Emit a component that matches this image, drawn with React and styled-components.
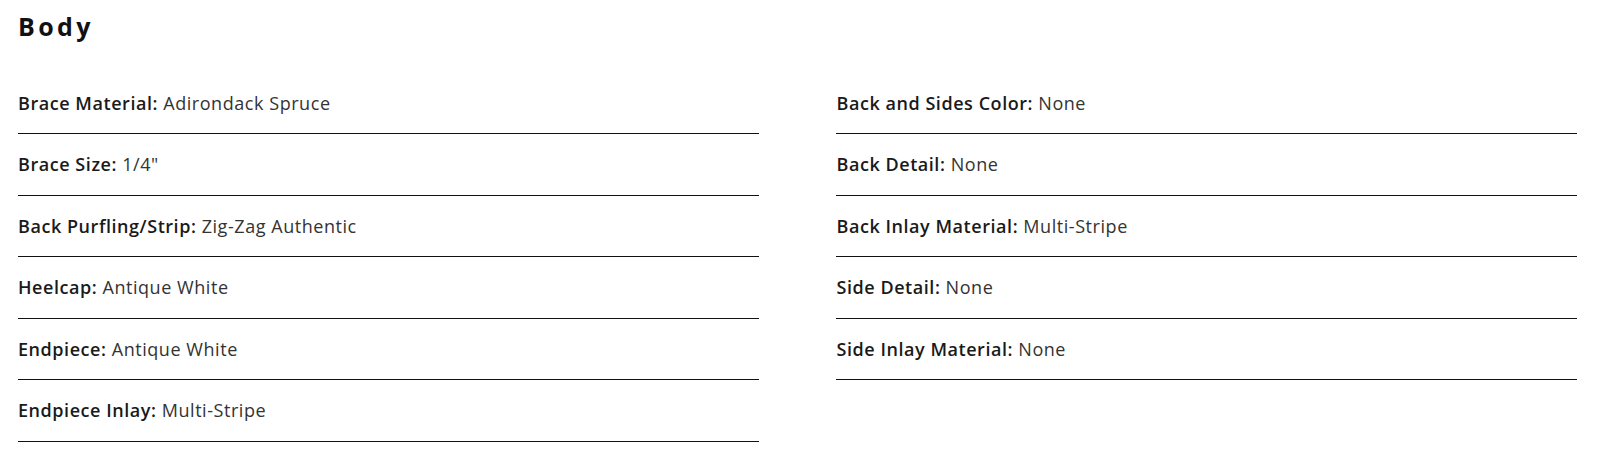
import React from "react";
import styled, { createGlobalStyle } from "styled-components";

const Global = createGlobalStyle`
  html, body { margin: 0; padding: 0; background: #fff; }
  body { font-family: "Open Sans", "Liberation Sans", sans-serif; color: #222; }
`;

const Section = styled.section`
  padding: 10px 23px 0 18px;
`;

const Title = styled.h2`
  margin: 0;
  font-size: 25px;
  font-weight: 700;
  letter-spacing: 3.4px;
  line-height: 32px;
  color: #111;
`;

const Columns = styled.div`
  display: grid;
  grid-template-columns: 47.5% 47.5%;
  justify-content: space-between;
  margin-top: 30.8px;
`;

const List = styled.ul`
  list-style: none;
  margin: 0;
  padding: 0;
`;

const Row = styled.li`
  padding: 16.75px 0;
  line-height: 27px;
  font-size: 18px;
  letter-spacing: 0.55px;
  border-bottom: 1px solid #111;
  color: #333;
`;

const Label = styled.strong`
  font-weight: 600;
  color: #1a1a1a;
`;

const left = [
  ["Brace Material", "Adirondack Spruce"],
  ["Brace Size", "1/4\""],
  ["Back Purfling/Strip", "Zig-Zag Authentic"],
  ["Heelcap", "Antique White"],
  ["Endpiece", "Antique White"],
  ["Endpiece Inlay", "Multi-Stripe"],
];
const right = [
  ["Back and Sides Color", "None"],
  ["Back Detail", "None"],
  ["Back Inlay Material", "Multi-Stripe"],
  ["Side Detail", "None"],
  ["Side Inlay Material", "None"],
];

function Specs({ items }) {
  return (
    <List>
      {items.map(([k, v]) => (
        <Row key={k}>
          <Label>{k}:</Label> {v}
        </Row>
      ))}
    </List>
  );
}

export default function App() {
  return (
    <>
      <Global />
      <Section>
        <Title>Body</Title>
        <Columns>
          <Specs items={left} />
          <Specs items={right} />
        </Columns>
      </Section>
    </>
  );
}
